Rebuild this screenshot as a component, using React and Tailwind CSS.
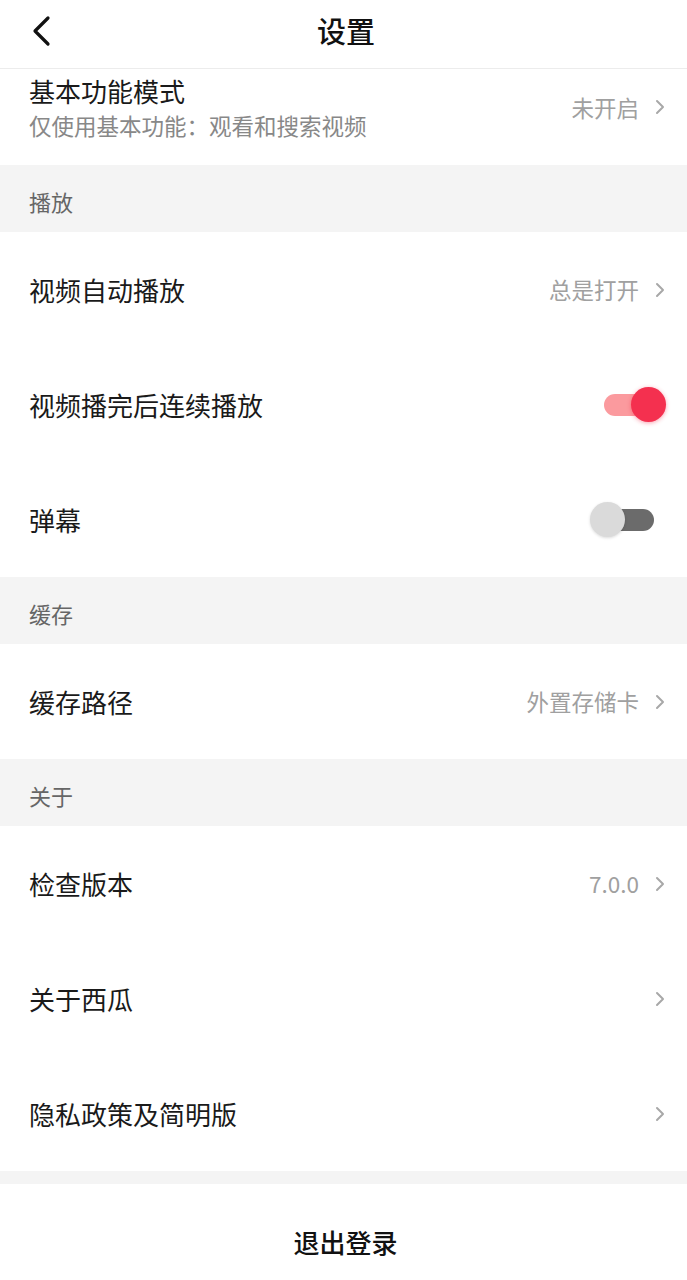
import React from "react";

const font = { fontFamily: '"Noto Sans CJK SC", "Noto Sans", sans-serif' };

function Chevron() {
  return (
    <svg width="10" height="16" viewBox="0 0 10 16" className="ml-[16px]">
      <polyline points="2,2 8,8 2,14" fill="none" stroke="#a8a8a8" strokeWidth="2" strokeLinecap="round" strokeLinejoin="round" />
    </svg>
  );
}

function Section({ label }) {
  return (
    <div className="h-[67px] bg-[#f4f4f4] flex items-center pl-[29px] pt-[4px] text-[22px] leading-none text-[#666]">
      {label}
    </div>
  );
}

function Row({ title, value, chevron = true, children }) {
  return (
    <div className="h-[115px] flex items-center justify-between pl-[29px] pr-[22px]">
      <div className="text-[26px] leading-none text-[#1a1a1a]">{title}</div>
      <div className="flex items-center">
        {value && <span className="text-[22.5px] leading-none text-[#a0a0a0]">{value}</span>}
        {chevron && <Chevron />}
        {children}
      </div>
    </div>
  );
}

function Toggle({ on }) {
  return (
    <div className="relative w-[66px] h-[36px] mr-[-2px]">
      <div
        className={
          "absolute top-[7px] left-[3px] w-[50px] h-[22px] rounded-full " +
          (on ? "bg-[#fb9a9e]" : "bg-[#6b6b6b]")
        }
      />
      <div
        className={
          "absolute top-0 w-[35px] h-[35px] rounded-full " +
          (on
            ? "left-[30px] bg-[#f4304f] shadow-[0_1px_4px_rgba(244,48,79,0.45)]"
            : "left-[-11px] bg-[#dadada] shadow-[0_1px_3px_rgba(0,0,0,0.15)]")
        }
      />
    </div>
  );
}

export default function App() {
  return (
    <div className="w-[687px] h-[1280px] bg-white overflow-hidden" style={font}>
      <div className="relative h-[69px] border-b border-[#ececec] flex items-center justify-center">
        <svg className="absolute left-[31px] top-[15px]" width="22" height="32" viewBox="0 0 22 32">
          <polyline points="17,3 4,16 17,29" fill="none" stroke="#111" strokeWidth="3.2" strokeLinecap="round" strokeLinejoin="round" />
        </svg>
        <div className="text-[29px] leading-none font-medium text-[#111] mt-[-7px] ml-[5px]">设置</div>
      </div>

      <div className="h-[96px] flex items-center justify-between pl-[29px] pr-[22px]">
        <div className="flex flex-col mt-[-20px]">
          <div className="text-[26px] leading-none text-[#1a1a1a]">基本功能模式</div>
          <div className="text-[22.5px] leading-none text-[#888] mt-[10px]">仅使用基本功能：观看和搜索视频</div>
        </div>
        <div className="flex items-center mt-[-20px]">
          <span className="text-[22.5px] leading-none text-[#a0a0a0]">未开启</span>
          <Chevron />
        </div>
      </div>

      <Section label="播放" />
      <Row title="视频自动播放" value="总是打开" />
      <Row title="视频播完后连续播放" chevron={false}>
        <Toggle on />
      </Row>
      <Row title="弹幕" chevron={false}>
        <Toggle on={false} />
      </Row>

      <Section label="缓存" />
      <Row title="缓存路径" value="外置存储卡" />

      <Section label="关于" />
      <Row title="检查版本" value="7.0.0" />
      <Row title="关于西瓜" />
      <Row title="隐私政策及简明版" />

      <div className="h-[13px] bg-[#f4f4f4]" />
      <div className="h-[120px] flex items-center justify-center">
        <div className="text-[26px] leading-none font-medium text-[#111] mt-[-4px] ml-[4px]">退出登录</div>
      </div>
    </div>
  );
}
